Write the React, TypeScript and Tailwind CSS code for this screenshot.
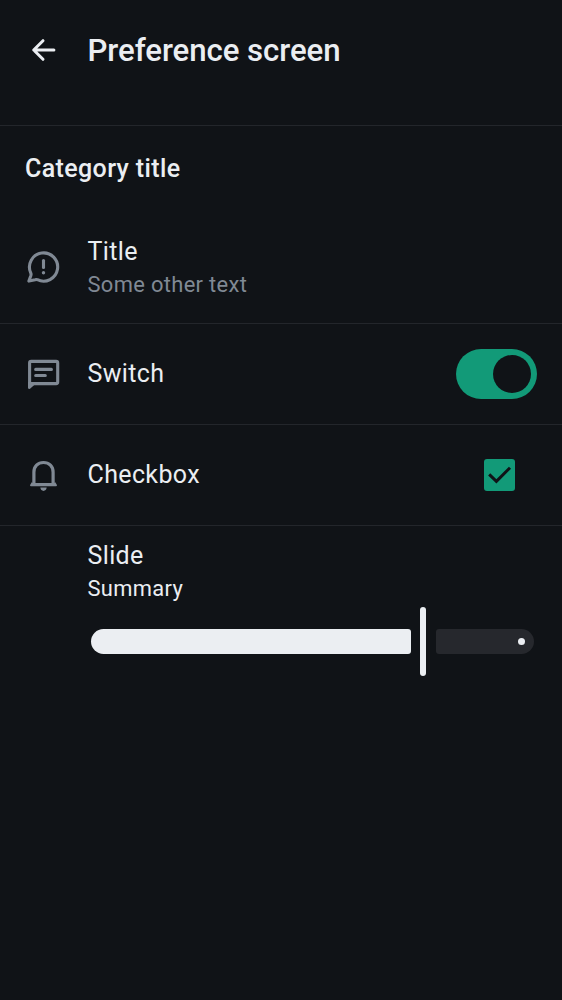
import React from "react";

function BackIcon() {
  return (
    <svg width="25" height="24" viewBox="0 0 25 24" fill="none" stroke="#ebeef2" strokeWidth="3" strokeLinecap="round" strokeLinejoin="round">
      <path d="M22.9 12H3M12 2.7L2.7 12L12 21.3" />
    </svg>
  );
}

function ChatProblemIcon() {
  return (
    <svg width="38" height="38" viewBox="0 0 38 38" fill="none" stroke="#808994" strokeWidth="3.1" strokeLinejoin="round">
      <path d="M13.4 31.7A14.1 14.1 0 1 0 6.7 24.8Q7.3 26.1 6.9 27.4L4.9 33.1L11.2 31.7Q12.4 31.4 13.4 31.7Z" />
      <path d="M19.5 12.6V19.5" strokeLinecap="round" />
      <circle cx="19.5" cy="24.8" r="1.7" fill="#808994" stroke="none" />
    </svg>
  );
}

function ThreadsIcon() {
  return (
    <svg width="38" height="38" viewBox="0 0 38 38" fill="none" stroke="#808994" strokeWidth="3.1" strokeLinecap="round">
      <path d="M5.6 30V8Q5.6 6.4 7.2 6.4H32.1Q33.7 6.4 33.7 8V27Q33.7 28.6 32.1 28.6H8.5" />
      <path d="M4 27H10.5V29.8L6 33.7Q4 34.8 4 32.6Z" fill="#808994" stroke="none" />
      <path d="M11.7 14.4H27.4M11.7 20.5H21.3" />
    </svg>
  );
}

function BellIcon() {
  return (
    <svg width="38" height="38" viewBox="0 0 38 38" fill="none" stroke="#808994" strokeWidth="3.2" strokeLinejoin="round">
      <path d="M9.9 28V16.2C9.9 10.4 13.8 6.5 19.5 6.5S29.1 10.4 29.1 16.2V28" />
      <path d="M8.3 25.5L6.3 28.4Q5.4 30.3 7.2 30.3H31.8Q33.6 30.3 32.7 28.4L30.7 25.5V27H8.3Z" fill="#808994" stroke="none" />
      <path d="M16.3 31.6H22.7Q22.2 34.9 19.5 34.9T16.3 31.6Z" fill="#808994" stroke="none" />
    </svg>
  );
}

function Row({ icon, title, subtitle, children }: { icon: React.ReactNode; title: string; subtitle?: string; children?: React.ReactNode }) {
  return (
    <div className="flex flex-1 items-center pr-[25px] pl-6">
      <div className="w-[63.5px] shrink-0">{icon}</div>
      <div className={subtitle ? "flex-1 pb-[3px]" : "flex-1 pb-px"}>
        <div className="text-[25px] leading-[37px] tracking-[0.37px]">{title}</div>
        {subtitle && <div className="text-[21.9px] leading-[29px] tracking-[0.34px] text-[#808994]">{subtitle}</div>}
      </div>
      {children}
    </div>
  );
}

export default function App() {
  return (
    <main className="flex h-[1000px] w-full flex-col bg-[#101317] font-['Roboto',sans-serif] text-[#ebeef2]">
      <header className="flex h-[100px] items-center pl-[31px]">
        <BackIcon />
        <h1 className="ml-[31.5px] pt-px text-[31.2px] leading-10 font-medium tracking-[-0.06px]">Preference screen</h1>
      </header>
      <section className="mt-[25px] flex h-[198px] flex-col border-t border-[#23262b]">
        <h2 className="h-[85px] pt-[26px] pl-[25px] text-[25px] leading-[34px] font-medium tracking-[0.38px]">Category title</h2>
        <Row icon={<ChatProblemIcon />} title="Title" subtitle="Some other text" />
      </section>
      <section className="flex h-[101px] border-t border-[#23262b]">
        <Row icon={<ThreadsIcon />} title="Switch">
          <div role="switch" aria-checked="true" className="flex h-[50px] w-[81px] items-center justify-end rounded-full bg-[#129a78] pr-1.5">
            <div className="size-[38px] rounded-full bg-[#101317]" />
          </div>
        </Row>
      </section>
      <section className="flex h-[101px] border-t border-[#23262b]">
        <Row icon={<BellIcon />} title="Checkbox">
          <div role="checkbox" aria-checked="true" className="mr-[22px] flex h-8 w-[31px] items-center justify-center rounded-[3px] bg-[#129a78]">
            <svg width="31" height="32" viewBox="0 0 31 32" fill="none" stroke="#101317" strokeWidth="3">
              <path d="M5.2 15.4L12.4 22.4L26 8.7" />
            </svg>
          </div>
        </Row>
      </section>
      <section className="border-t border-[#23262b] pt-[11px] pl-[87.5px]">
        <div className="text-[25px] leading-[37px] tracking-[0.37px]">Slide</div>
        <div className="text-[21.9px] leading-[29px] tracking-[0.34px]">Summary</div>
        <div className="mt-1 ml-[3px] flex h-[69px] items-center">
          <div className="h-[25px] w-[320px] rounded-l-[12.5px] rounded-r-[3px] bg-[#ebeef2]" />
          <div className="ml-[9.5px] h-[69px] w-1.5 rounded-full bg-[#ebeef2]" />
          <div className="ml-[9.5px] flex h-[25px] w-[98.5px] items-center justify-end rounded-l-[3px] rounded-r-[12.5px] bg-[#26282d] pr-[9px]">
            <div className="size-[7px] rounded-full bg-[#ebeef2]" />
          </div>
        </div>
      </section>
    </main>
  );
}
